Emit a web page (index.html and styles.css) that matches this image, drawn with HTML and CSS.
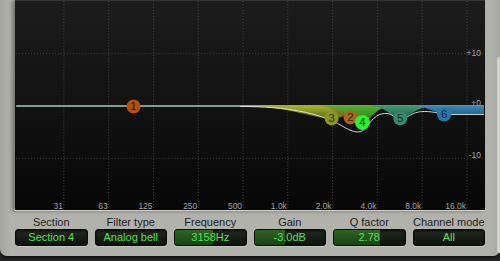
FILE: index.html
```html
<!DOCTYPE html>
<html lang="en">
<head>
    <meta charset="UTF-8">
    <meta name="viewport" content="width=device-width, initial-scale=1.0">
    <title>Parametric EQ</title>
    <link rel="stylesheet" href="styles.css">
</head>
<body>
    <div class="device">
        <!-- graph -->
        <div class="screen">
            <svg class="graph" width="470" height="210" viewBox="15 0 470 210">
                <defs>
                    <linearGradient id="g3" x1="0" y1="0" x2="0" y2="1">
                        <stop offset="0" stop-color="#a8b82a"/>
                        <stop offset="1" stop-color="#5e6a14"/>
                    </linearGradient>
                    <linearGradient id="g2" x1="0" y1="0" x2="0" y2="1">
                        <stop offset="0" stop-color="#98a426"/>
                        <stop offset="1" stop-color="#6a5018"/>
                    </linearGradient>
                    <linearGradient id="g4" x1="0" y1="0" x2="0" y2="1">
                        <stop offset="0" stop-color="#58b030"/>
                        <stop offset="1" stop-color="#2a7a1c"/>
                    </linearGradient>
                    <linearGradient id="g5" x1="0" y1="0" x2="0" y2="1">
                        <stop offset="0" stop-color="#3c9a70"/>
                        <stop offset="1" stop-color="#22604a"/>
                    </linearGradient>
                    <linearGradient id="g6" x1="0" y1="0" x2="0" y2="1">
                        <stop offset="0" stop-color="#3a8cb4"/>
                        <stop offset="1" stop-color="#22648a"/>
                    </linearGradient>
                </defs>

                <!-- grid -->
                <g class="grid">
                    <line x1="63" y1="0" x2="63" y2="210"/>
                    <line x1="108" y1="0" x2="108" y2="210"/>
                    <line x1="153" y1="0" x2="153" y2="210"/>
                    <line x1="198" y1="0" x2="198" y2="210"/>
                    <line x1="243" y1="0" x2="243" y2="210"/>
                    <line x1="288" y1="0" x2="288" y2="210"/>
                    <line x1="333" y1="0" x2="333" y2="210"/>
                    <line x1="378" y1="0" x2="378" y2="210"/>
                    <line x1="423" y1="0" x2="423" y2="210"/>
                    <line x1="468" y1="0" x2="468" y2="210"/>
                    <line x1="15" y1="53" x2="485" y2="53"/>
                    <line x1="15" y1="158" x2="485" y2="158"/>
                </g>

                <g class="axis">
                    <text x="62" y="209">31</text>
                    <text x="107" y="209">63</text>
                    <text x="152" y="209">125</text>
                    <text x="197" y="209">250</text>
                    <text x="242" y="209">500</text>
                    <text x="287" y="209">1.0k</text>
                    <text x="332" y="209">2.0k</text>
                    <text x="377" y="209">4.0k</text>
                    <text x="422" y="209">8.0k</text>
                    <text x="467" y="209">16.0k</text>
                    <text x="482" y="55">+10</text>
                    <text x="482" y="106">+0</text>
                    <text x="482" y="158">-10</text>
                </g>

                <!-- flat response -->
                <line class="flat" x1="15" y1="105.5" x2="485" y2="105.5"/>

                <!-- band fills -->
                <path fill="url(#g3)" d="M 236 105 C 288 105, 312 118, 332 118 C 348 118, 358 105, 376 105 Z"/>
                <path fill="url(#g2)" opacity="0.9" d="M 312 105 C 335 105, 340 117, 351 117 C 360 117, 362 105, 374 105 Z"/>
                <path fill="url(#g4)" d="M 318 105 C 345 105, 352 122, 363 122 C 372 122, 374 105, 396 105 Z"/>
                <path fill="url(#g5)" d="M 366 105 C 388 105, 392 118, 401 118 C 410 118, 416 105, 440 105 Z"/>
                <path fill="url(#g6)" d="M 408 105 C 430 105, 436 114, 448 114 L 485 114 L 485 105 Z"/>

                <!-- total response -->
                <path class="total" d="M 240 106 C 290 106, 318 113, 338 123 C 350 130, 356 133, 362 131 C 370 127, 372 114, 385 113 C 393 112, 396 119, 401 119 C 408 119, 411 111, 425 111 C 437 111, 440 114, 452 114 L 485 114"/>

                <!-- band handles -->
                <g class="handle">
                    <circle cx="133" cy="106" r="7" fill="#b4500f"/>
                    <text x="133" y="110" fill="#3a1604">1</text>
                    <circle cx="332" cy="118" r="7" fill="#8c9626"/>
                    <text x="332" y="122" fill="#2e3208">3</text>
                    <circle cx="351" cy="117" r="7" fill="#a8661e"/>
                    <text x="351" y="121" fill="#3a2006">2</text>
                    <circle cx="363" cy="122" r="7.5" fill="#2ef02e"/>
                    <text x="363" y="126" fill="#0a3a0a">4</text>
                    <circle cx="401" cy="118" r="7" fill="#3a8a6c"/>
                    <text x="401" y="122" fill="#0e2e22">5</text>
                    <circle cx="445" cy="114" r="7" fill="#2a78a8"/>
                    <text x="445" y="118" fill="#0c2a40">6</text>
                </g>
            </svg>
        </div>

        <!-- controls -->
        <div class="controls">
            <div class="control">
                <span class="label">Section</span>
                <div class="value">Section 4</div>
            </div>
            <div class="control">
                <span class="label">Filter type</span>
                <div class="value">Analog bell</div>
            </div>
            <div class="control">
                <span class="label">Frequency</span>
                <div class="value"><span class="fill" style="width: 54%"></span><span class="text">3158Hz</span></div>
            </div>
            <div class="control">
                <span class="label">Gain</span>
                <div class="value"><span class="fill" style="width: 43%"></span><span class="text">-3.0dB</span></div>
            </div>
            <div class="control">
                <span class="label">Q factor</span>
                <div class="value"><span class="fill" style="width: 65%"></span><span class="text">2.78</span></div>
            </div>
            <div class="control">
                <span class="label">Channel mode</span>
                <div class="value">All</div>
            </div>
        </div>
    </div>
</body>
</html>
```

FILE: styles.css
```css
body {
    margin: 0;
    padding: 0;
    background-color: #262626;
    font-family: 'Liberation Sans', Arial, sans-serif;
    width: 500px;
    height: 261px;
    overflow: hidden;
}
.device {
    position: relative;
    width: 500px;
    height: 256px;
    background: linear-gradient(90deg, #a2a29e 0px, #b2b2ad 10px, #b2b2ad 490px, #a6a6a2 500px);
    border-radius: 0 0 7px 7px;
    display: flex;
    flex-direction: column;
    box-shadow: 0 2px 3px rgba(0, 0, 0, 0.6);
}
.device::after {
    content: "";
    position: absolute;
    right: 0;
    top: 57px;
    bottom: 3px;
    width: 3px;
    background-color: #d2d2ce;
    border-radius: 3px 0 0 3px;
}
.screen {
    padding: 0 15px;
    height: 211px;
}
.graph {
    display: block;
    background: linear-gradient(#1c1c1c, #131313 45%, #070707);
    border-top: 1px solid #343434;
    border-bottom: 1px solid #cfcfca;
    box-shadow: -3px 0 4px rgba(0, 0, 0, 0.35);
    height: 209px;
}
.grid line {
    stroke: #4e4e4e;
    stroke-width: 0.8;
    stroke-dasharray: 1 2;
}
.axis text {
    font-family: 'Liberation Sans', Arial, sans-serif;
    font-size: 8.5px;
    fill: #a2a2a2;
    text-anchor: end;
}
.flat {
    stroke: #a9cbc2;
    stroke-width: 1.5;
}
.total {
    fill: none;
    stroke: #e6e6e6;
    stroke-width: 0.9;
}
.handle text {
    font-family: 'Liberation Sans', Arial, sans-serif;
    font-size: 11.5px;
    text-anchor: middle;
}
.controls {
    display: grid;
    grid-template-columns: repeat(6, 1fr);
    column-gap: 7px;
    padding: 5px 15px 0 15px;
}
.control {
    display: flex;
    flex-direction: column;
    align-items: stretch;
}
.label {
    font-size: 11px;
    line-height: 12px;
    color: #1c1c1c;
    text-align: center;
    margin-bottom: 1px;
}
.value {
    position: relative;
    height: 15px;
    border: 1px solid #0a0a0a;
    border-radius: 3px;
    background: linear-gradient(#222820, #0e110c);
    box-shadow: inset 0 1px 2px rgba(0, 0, 0, 0.8), 0 1px 1px rgba(255, 255, 255, 0.25);
    color: #52e252;
    font-size: 11px;
    line-height: 15px;
    text-align: center;
    overflow: hidden;
}
.fill {
    position: absolute;
    left: 0;
    top: 0;
    bottom: 0;
    background: linear-gradient(#2e6424, #1a4214);
}
.text {
    position: relative;
}
```
